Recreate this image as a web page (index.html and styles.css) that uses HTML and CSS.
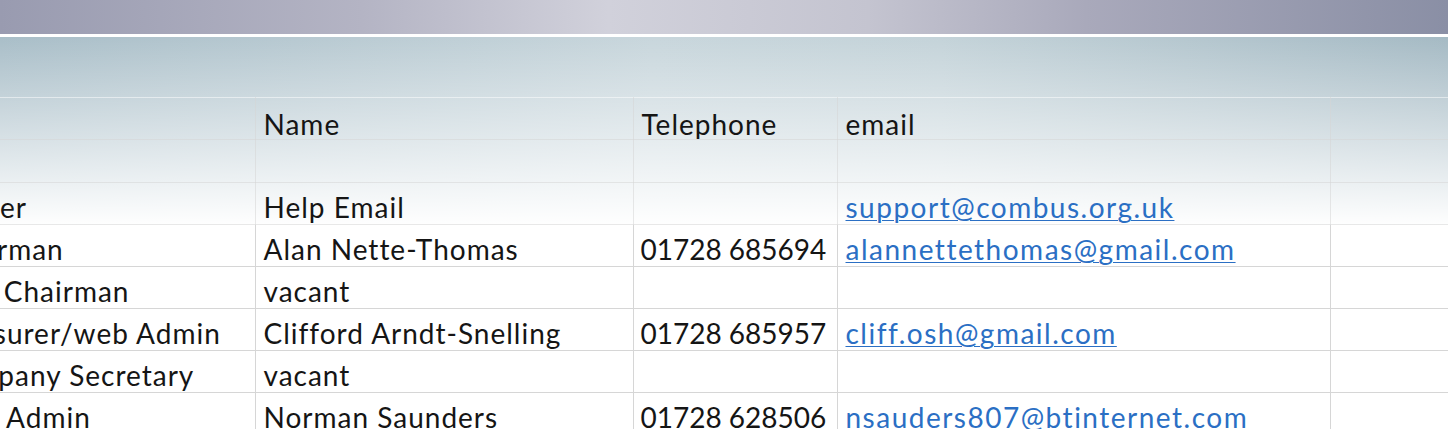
FILE: index.html
```html
<!DOCTYPE html>
<html lang="en">

<head>
    <meta charset="UTF-8" />
    <meta name="viewport" content="width=device-width, initial-scale=1.0" />
    <title>Contacts</title>
    <link rel="stylesheet" href="styles.css">
</head>

<body>
    <div class="banner"></div>
    <div class="rule"></div>

    <div class="sheet">
        <table class="contacts">
            <colgroup>
                <col class="col-role">
                <col class="col-name">
                <col class="col-phone">
                <col class="col-email">
                <col class="col-extra">
            </colgroup>
            <tr class="head">
                <td></td>
                <td>Name</td>
                <td>Telephone</td>
                <td>email</td>
                <td></td>
            </tr>
            <tr class="head-gap">
                <td></td><td></td><td></td><td></td><td></td>
            </tr>
            <tr>
                <td>Helper</td>
                <td>Help Email</td>
                <td></td>
                <td><a href="#">support@combus.org.uk</a></td>
                <td></td>
            </tr>
            <tr class="solid">
                <td>Chairman</td>
                <td>Alan Nette-Thomas</td>
                <td class="phone">01728 685694</td>
                <td><a href="#">alannettethomas@gmail.com</a></td>
                <td></td>
            </tr>
            <tr class="solid">
                <td>Vice Chairman</td>
                <td>vacant</td>
                <td></td>
                <td></td>
                <td></td>
            </tr>
            <tr class="solid">
                <td>Treasurer/web Admin</td>
                <td>Clifford Arndt-Snelling</td>
                <td class="phone">01728 685957</td>
                <td><a href="#">cliff.osh@gmail.com</a></td>
                <td></td>
            </tr>
            <tr class="solid">
                <td>Company Secretary</td>
                <td>vacant</td>
                <td></td>
                <td></td>
                <td></td>
            </tr>
            <tr class="solid">
                <td>Web Admin</td>
                <td>Norman Saunders</td>
                <td class="phone">01728 628506</td>
                <td><a href="#">nsauders807@btinternet.com</a></td>
                <td></td>
            </tr>
        </table>
    </div>
</body>

</html>
```

FILE: styles.css
```css
:root {
    --texto: #151515;
    --link: #2b6fc4;
    --linha: #d6d6d6;
}

body {
    margin: 0;
    overflow: hidden;
    background: #fff;
    font-family: Lato, 'Noto Sans', sans-serif;
    color: var(--texto);
}

.banner {
    height: 34px;
    background: linear-gradient(90deg, #999bb0 0%, #b4b4c4 25%, #d1d1db 42%, #c4c4d0 60%, #a9a9bb 75%, #8a8fa5 100%);
}

.rule {
    height: 3px;
    background: #fff;
}

.sheet {
    padding-top: 60px;
    background:
        linear-gradient(180deg, rgba(255, 255, 255, 0) 0%, #fff 190px),
        linear-gradient(90deg, #a9bec8 0%, #c8d6dc 45%, #c4d3d9 65%, #a5bac4 100%);
}

.contacts {
    border-collapse: collapse;
    table-layout: fixed;
    width: 1600px;
    margin-left: -70px;
    font-size: 28px;
    letter-spacing: 1px;
}

.col-role { width: 325px; }
.col-name { width: 378px; }
.col-phone { width: 204px; }
.col-email { width: 493px; }
.col-extra { width: 200px; }

.contacts td {
    height: 39px;
    padding: 0 0 2px 8px;
    vertical-align: bottom;
    line-height: 30px;
    white-space: nowrap;
    overflow: hidden;
    border: 1px solid rgba(214, 214, 214, 0.55);
}

.contacts tr:first-child td {
    border-top-color: rgba(255, 255, 255, 0.5);
}

.contacts td:first-child {
    border-left: none;
}

.head td {
    padding-bottom: 0;
    height: 41px;
}

.head-gap td {
    height: 40px;
}

.contacts td.phone {
    letter-spacing: 0;
    padding-left: 7px;
}

.solid td {
    background: #fff;
    border-color: var(--linha);
}

.contacts a {
    color: var(--link);
    letter-spacing: 1.5px;
    text-decoration: underline;
    text-decoration-thickness: 1px;
    text-underline-offset: 2px;
}
```
